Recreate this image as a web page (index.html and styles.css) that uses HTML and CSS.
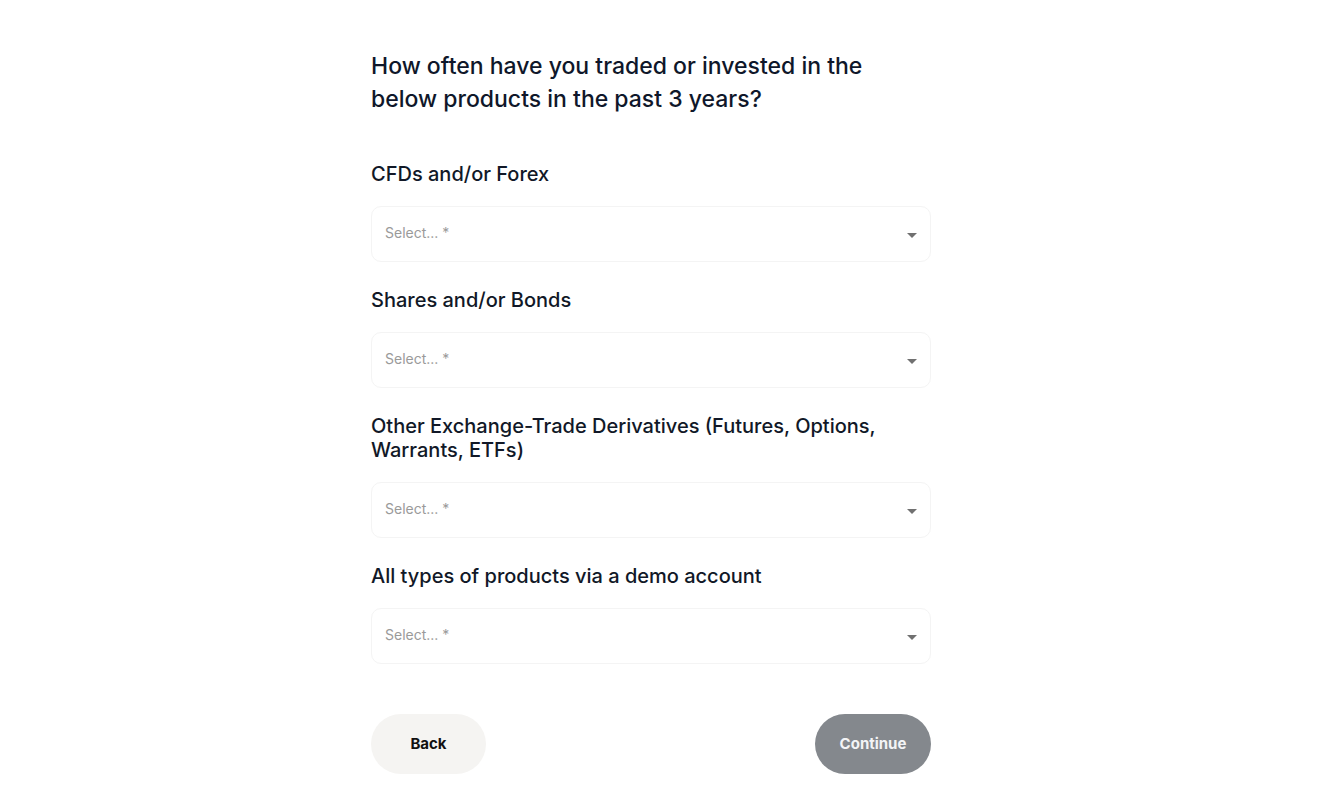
FILE: index.html
```html
<!DOCTYPE html>
<html lang="en">
<head>
<meta charset="utf-8">
<title>Trading experience</title>
<link rel="stylesheet" href="styles.css">
</head>
<body>
<main class="page">
  <form class="form">
    <h1 class="title">How often have you traded or invested in the below products in the past 3 years?</h1>

    <div class="field">
      <label class="label">CFDs and/or Forex</label>
      <div class="select"><span class="placeholder">Select... *</span><span class="caret"></span></div>
    </div>

    <div class="field">
      <label class="label">Shares and/or Bonds</label>
      <div class="select"><span class="placeholder">Select... *</span><span class="caret"></span></div>
    </div>

    <div class="field">
      <label class="label">Other Exchange-Trade Derivatives (Futures, Options, Warrants, ETFs)</label>
      <div class="select"><span class="placeholder">Select... *</span><span class="caret"></span></div>
    </div>

    <div class="field">
      <label class="label">All types of products via a demo account</label>
      <div class="select"><span class="placeholder">Select... *</span><span class="caret"></span></div>
    </div>

    <div class="actions">
      <button type="button" class="btn btn-back">Back</button>
      <button type="button" class="btn btn-continue">Continue</button>
    </div>
  </form>
</main>
</body>
</html>
```

FILE: styles.css
```css
* { box-sizing: border-box; }
html, body { margin: 0; padding: 0; background: #ffffff; }
body {
  font-family: Inter, "Noto Sans", "Liberation Sans", sans-serif;
  color: #0f172a;
}
.page {
  width: 578px;
  margin: 0 auto;
  padding: 50px 18px 0 0;
}
.form {
  width: 560px;
  display: flex;
  flex-direction: column;
}
.title {
  margin: 0 0 46px 0;
  font-size: 23px;
  line-height: 33px;
  font-weight: 500;
  color: #0f172a;
}
.field {
  display: flex;
  flex-direction: column;
  gap: 20px;
  margin-bottom: 26px;
}
.label {
  font-size: 20px;
  line-height: 24px;
  font-weight: 500;
  color: #111827;
}
.select {
  height: 56px;
  border: 1px solid #f4f4f4;
  border-radius: 10px;
  display: flex;
  align-items: center;
  justify-content: space-between;
  padding: 0 13px 0 13px;
}
.placeholder {
  font-size: 14px;
  color: #9a9a9a;
  margin-top: -4px;
}
.caret {
  width: 0;
  height: 0;
  border-left: 5px solid transparent;
  border-right: 5px solid transparent;
  border-top: 5px solid #707070;
  margin-top: 2px;
}
.actions {
  display: flex;
  justify-content: space-between;
  margin-top: 24px;
}
.btn {
  height: 60px;
  border: none;
  border-radius: 30px;
  font-family: Inter, "Noto Sans", "Liberation Sans", sans-serif;
  font-size: 15px;
  font-weight: 700;
  padding: 0 0 2px 0;
}
.btn-back {
  width: 115px;
  background: #f5f4f2;
  color: #111111;
}
.btn-continue {
  width: 116px;
  background: #84888d;
  color: #f3f4f6;
}
```
